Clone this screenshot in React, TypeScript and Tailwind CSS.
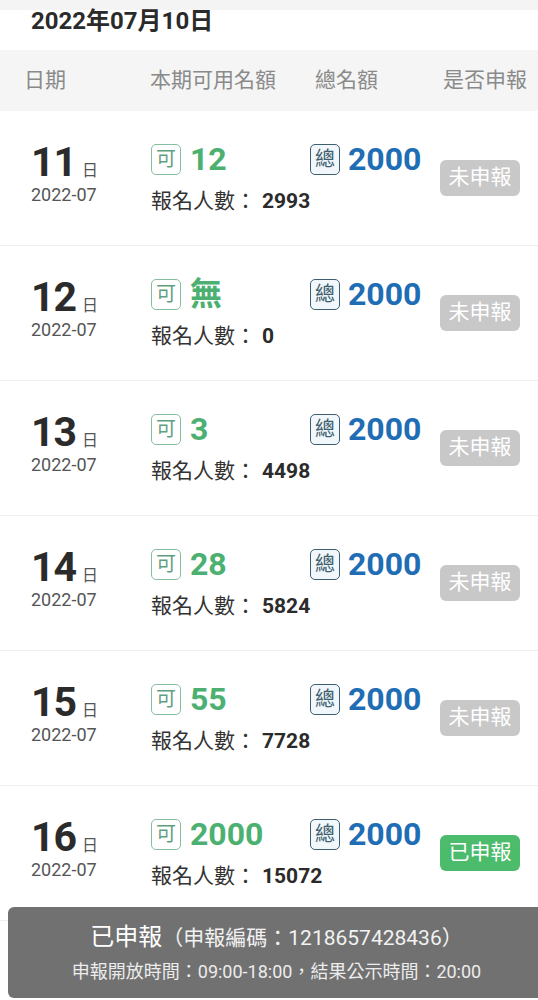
import React from "react";

type Row = { day: string; avail: string; count: string; done: boolean };

const rows: Row[] = [
  { day: "11", avail: "12", count: "2993", done: false },
  { day: "12", avail: "無", count: "0", done: false },
  { day: "13", avail: "3", count: "4498", done: false },
  { day: "14", avail: "28", count: "5824", done: false },
  { day: "15", avail: "55", count: "7728", done: false },
  { day: "16", avail: "2000", count: "15072", done: true },
];

const font = { fontFamily: "Roboto, 'Noto Sans CJK TC', 'Noto Sans', sans-serif" };

function DayRow({ r }: { r: Row }) {
  return (
    <div className="flex h-[135px] border-b border-[#efefef] bg-white">
      <div className="w-[151px] shrink-0 pl-[31px] pt-[31px]">
        <div className="flex h-[40px] items-baseline leading-[40px]">
          <span className="text-[41px] font-bold text-[#2b2b2b] tracking-[-1px]">{r.day}</span>
          <span className="ml-[6px] text-[16px] text-[#555]">日</span>
        </div>
        <div className="mt-[2px] text-[18px] leading-[22px] text-[#555]">2022-07</div>
      </div>
      <div className="flex-1 pt-[31px]">
        <div className="flex items-center h-[34px]">
          <div className="flex w-[159px] items-center">
            <span className="flex h-[31px] w-[30px] items-center justify-center rounded-[5px] border-[1.5px] border-[#86bea0] text-[20px] leading-none text-[#5f9f7f]">
              可
            </span>
            <span className="ml-[9px] text-[32px] font-bold leading-none text-[#4cb071]">{r.avail}</span>
          </div>
          <div className="flex items-center">
            <span className="flex h-[31px] w-[30px] items-center justify-center rounded-[5px] border-[1.5px] border-[#3f5f70] bg-[#f1f7fa] text-[20px] leading-none text-[#3f5f70]">
              總
            </span>
            <span className="ml-[8px] text-[32px] font-bold leading-none text-[#1f6db5]">2000</span>
          </div>
        </div>
        <div className="mt-[11px] flex items-center text-[21px] leading-[28px] text-[#333]">
          <span>報名人數：</span>
          <span className="ml-[6px] font-bold text-[#2b2b2b]">{r.count}</span>
        </div>
      </div>
      <div className="w-[98px] shrink-0 pt-[49px]">
        <div
          className={
            r.done
              ? "flex h-[36px] w-[80px] items-center justify-center rounded-[6px] bg-[#4cbb6c] text-[21px] text-white"
              : "flex h-[36px] w-[80px] items-center justify-center rounded-[6px] bg-[#c8c8c8] text-[21px] text-white"
          }
        >
          {r.done ? "已申報" : "未申報"}
        </div>
      </div>
    </div>
  );
}

export default function App() {
  return (
    <div className="relative h-[1000px] w-[538px] overflow-hidden bg-white" style={font}>
      <div className="h-[10px] bg-[#f4f4f4]" />
      <div className="h-[40px] bg-white pl-[31px]">
        <div className="text-[24px] font-bold leading-[22px] text-[#2b2b2b]">2022年07月10日</div>
      </div>
      <div className="flex h-[61px] items-center bg-[#f5f5f5] text-[21px] text-[#8a8a8a]">
        <span className="w-[150px] pl-[24px]">日期</span>
        <span className="w-[165px]">本期可用名額</span>
        <span className="w-[128px]">總名額</span>
        <span>是否申報</span>
      </div>
      {rows.map((r) => (
        <DayRow key={r.day} r={r} />
      ))}
      <div className="absolute bottom-[2px] left-[8px] w-[537px] rounded-[6px] bg-[#717171] pt-[14px] pb-[14px] text-center text-white">
        <div className="flex items-baseline justify-center leading-[32px]">
          <span className="text-[24px]">已申報</span>
          <span className="text-[21px] text-[#f2f2f2]">（申報編碼：1218657428436）</span>
        </div>
        <div className="mt-[6px] text-[18px] leading-[24px] text-[#ececec]">
          申報開放時間：09:00-18:00，結果公示時間：20:00
        </div>
      </div>
    </div>
  );
}
